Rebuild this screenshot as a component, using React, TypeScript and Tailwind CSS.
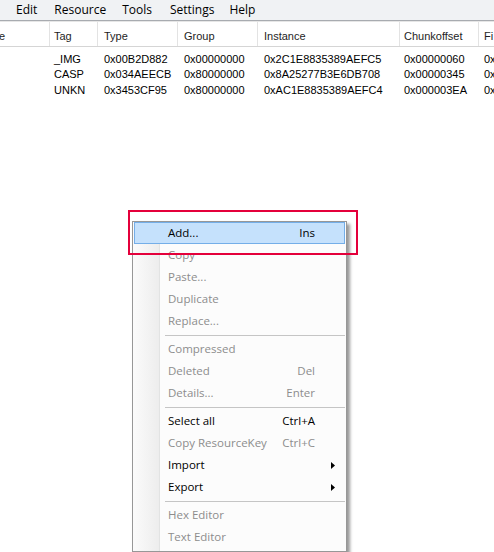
import React from "react";

const cols = [
  { w: "w-[50px]", pl: "pl-0" },
  { w: "w-[48px]", pl: "pl-[4px]" },
  { w: "w-[80px]", pl: "pl-[6px]" },
  { w: "w-[80px]", pl: "pl-[6px]" },
  { w: "w-[142px]", pl: "pl-[6px]" },
  { w: "w-[79px]", pl: "pl-[4px]" },
  { w: "w-[40px]", pl: "pl-[5px]" },
];

const headers = ["e", "Tag", "Type", "Group", "Instance", "Chunkoffset", "Fi"];

const rows = [
  ["", "_IMG", "0x00B2D882", "0x00000000", "0x2C1E8835389AEFC5", "0x00000060", "0x0"],
  ["", "CASP", "0x034AEECB", "0x80000000", "0x8A25277B3E6DB708", "0x00000345", "0x0"],
  ["", "UNKN", "0x3453CF95", "0x80000000", "0xAC1E8835389AEFC4", "0x000003EA", "0x0"],
];

type Item =
  | { sep: true }
  | { sep?: false; label: string; key?: string; disabled?: boolean; sub?: boolean; active?: boolean };

const items: Item[] = [
  { label: "Add...", key: "Ins", active: true },
  { label: "Copy", disabled: true },
  { label: "Paste...", disabled: true },
  { label: "Duplicate", disabled: true },
  { label: "Replace...", disabled: true },
  { sep: true },
  { label: "Compressed", disabled: true },
  { label: "Deleted", key: "Del", disabled: true },
  { label: "Details...", key: "Enter", disabled: true },
  { sep: true },
  { label: "Select all", key: "Ctrl+A" },
  { label: "Copy ResourceKey", key: "Ctrl+C", disabled: true },
  { label: "Import", sub: true },
  { label: "Export", sub: true },
  { sep: true },
  { label: "Hex Editor", disabled: true },
  { label: "Text Editor", disabled: true },
];

function ContextMenu() {
  return (
    <div className="absolute left-[132px] top-[221px] w-[215px] border border-[#979797] bg-[#fcfcfc] pt-0 pb-[3px] shadow-[3px_3px_3px_rgba(0,0,0,0.4)] font-['Open_Sans',sans-serif] text-[11.5px]">
      <div className="absolute left-0 top-0 bottom-0 w-[27px] bg-gradient-to-r from-[#fbfbfb] to-[#ededed] border-r border-[#e2e3e3]" />
      {items.map((it, i) =>
        it.sep ? (
          <div key={i} className="relative h-[6px] flex items-center pl-[32px] pr-[1px]">
            <div className="h-px w-full bg-[#c5c5c5]" />
          </div>
        ) : (
          <div
            key={i}
            className={`relative mx-[1px] h-[22px] flex items-center pl-[34px] pr-[29px] border ${
              it.active ? "bg-[#c5e1fc] border-[#74aee8]" : "border-transparent"
            } ${it.disabled ? "text-[#8d8d8d]" : "text-black"}`}
          >
            <span className="flex-1 -ml-px">{it.label}</span>
            {it.key && <span>{it.key}</span>}
            {it.sub && (
              <svg className="absolute left-[196px] top-[7px]" width="4" height="7" viewBox="0 0 4 7">
                <path d="M0 0 L4 3.5 L0 7 Z" fill="#000" />
              </svg>
            )}
          </div>
        )
      )}
    </div>
  );
}

export default function App() {
  return (
    <div className="relative w-[494px] h-[552px] bg-white overflow-hidden">
      <div className="h-[21px] bg-[#f0f2f4] border-b border-[#a8abb0] flex items-center text-[12px] text-black font-['Open_Sans',sans-serif]">
        <span className="ml-[16px]">Edit</span>
        <span className="ml-[17px]">Resource</span>
        <span className="ml-[16px]">Tools</span>
        <span className="ml-[18px]">Settings</span>
        <span className="ml-[15px]">Help</span>
      </div>
      <div className="font-['Liberation_Sans',Arial,sans-serif] text-[11px]">
        <div className="h-[26px] flex border-t border-[#e6e6e6] border-b border-b-[#d5d5d5] bg-white text-[#1e1e1e]">
          {headers.map((h, i) => (
            <div
              key={i}
              className={`${cols[i].w} ${cols[i].pl} shrink-0 flex items-center pt-[5px] overflow-hidden whitespace-nowrap border-r border-[#e3e3e3]`}
            >
              <span className={i === 0 ? "-ml-[1px]" : ""}>{h}</span>
            </div>
          ))}
        </div>
        <div className="pt-[4px]">
          {rows.map((r, ri) => (
            <div key={ri} className="h-[15.5px] flex items-center text-black">
              {r.map((c, ci) => (
                <div key={ci} className={`${cols[ci].w} ${cols[ci].pl} shrink-0 overflow-hidden whitespace-nowrap`}>
                  {c}
                </div>
              ))}
            </div>
          ))}
        </div>
      </div>
      <ContextMenu />
      <div className="absolute left-[128px] top-[210px] w-[230px] h-[45px] border-2 border-[#e4003b]" />
    </div>
  );
}
